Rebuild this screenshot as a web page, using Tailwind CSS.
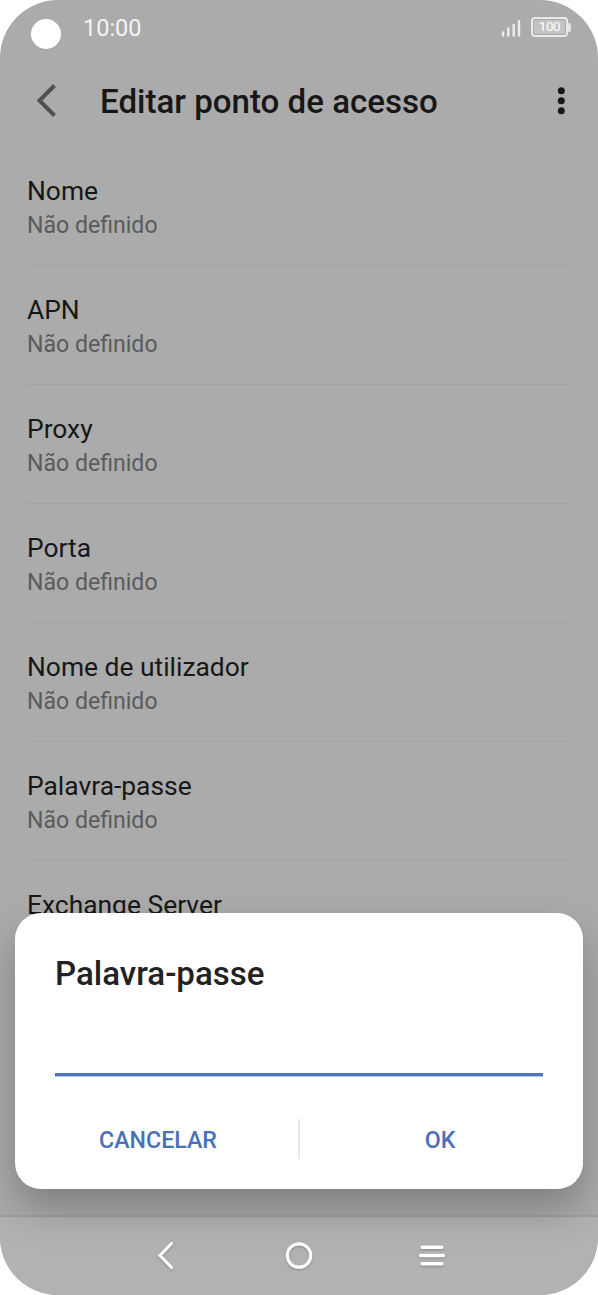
<!DOCTYPE html>
<html lang="pt">
<head>
<meta charset="utf-8">
<title>Editar ponto de acesso</title>
<script src="https://cdn.jsdelivr.net/npm/@tailwindcss/browser@4"></script>
</head>
<body class="bg-white">
<div class="relative flex h-[1295px] w-[598px] flex-col overflow-hidden rounded-[58px] bg-[#ababab] font-['Roboto',sans-serif] text-[#171717]">
  <header class="flex h-14 shrink-0 items-start pl-[31px] pr-[27px] text-[#f4f4f4]">
    <span class="mt-[19px] size-[30px] rounded-full bg-white"></span>
    <span class="ml-[22px] mt-[14px] text-[23.5px] leading-[28px]">10:00</span>
    <svg class="ml-auto mt-[20px]" width="20" height="18" viewBox="0 0 20 18" stroke="#ededed" stroke-width="2.4" stroke-linecap="round"><path d="M2 12.500v3M7.300 8.500v7M12.700 5v10.500M18 1.200v14.300"/></svg>
    <div class="ml-[10px] mt-[17px] flex items-center">
      <div class="flex h-[20px] w-[37px] rounded-[4px] border-2 border-[#e9e9e9] p-px">
        <span class="flex flex-1 items-center justify-center rounded-[2px] bg-[#c3c3c3] text-[13.5px] leading-none tracking-[-0.5px] text-white">100</span>
      </div>
      <span class="h-[9px] w-[3px] rounded-r-[2px] bg-[#e2e2e2]"></span>
    </div>
  </header>

  <div class="flex h-[91px] shrink-0 items-center pl-[35px] pr-[33px]">
    <svg class="-mt-px" width="22" height="34" viewBox="0 0 22 34" fill="none" stroke="#505050" stroke-width="4"><path d="M19.500 1.500 4.500 16.500l15 15"/></svg>
    <h1 class="ml-[43px] mt-px text-[33.1px] font-medium leading-[40px]">Editar ponto de acesso</h1>
    <svg class="-mt-px ml-auto" width="8" height="28" viewBox="0 0 8 28" fill="#171717"><circle cx="4.300" cy="3.800" r="3.500"/><circle cx="4.300" cy="13.800" r="3.500"/><circle cx="4.300" cy="23.800" r="3.500"/></svg>
  </div>

  <main class="flex h-[1069px] shrink-0 flex-col overflow-hidden pl-[27px] pr-[26px]">
    <div class="flex h-[119px] shrink-0 flex-col border-b border-[#a2a2a2] pt-[28px]"><span class="text-[26.4px] leading-[32px]">Nome</span><span class="mt-[5px] text-[23.1px] leading-[28px] text-[#5b5b5b]">Não definido</span></div>
    <div class="flex h-[119px] shrink-0 flex-col border-b border-[#a2a2a2] pt-[28px]"><span class="text-[26.4px] leading-[32px]">APN</span><span class="mt-[5px] text-[23.1px] leading-[28px] text-[#5b5b5b]">Não definido</span></div>
    <div class="flex h-[119px] shrink-0 flex-col border-b border-[#a2a2a2] pt-[28px]"><span class="text-[26.4px] leading-[32px]">Proxy</span><span class="mt-[5px] text-[23.1px] leading-[28px] text-[#5b5b5b]">Não definido</span></div>
    <div class="flex h-[119px] shrink-0 flex-col border-b border-[#a2a2a2] pt-[28px]"><span class="text-[26.4px] leading-[32px]">Porta</span><span class="mt-[5px] text-[23.1px] leading-[28px] text-[#5b5b5b]">Não definido</span></div>
    <div class="flex h-[119px] shrink-0 flex-col border-b border-[#a2a2a2] pt-[28px]"><span class="text-[26.4px] leading-[32px]">Nome de utilizador</span><span class="mt-[5px] text-[23.1px] leading-[28px] text-[#5b5b5b]">Não definido</span></div>
    <div class="flex h-[119px] shrink-0 flex-col border-b border-[#a2a2a2] pt-[28px]"><span class="text-[26.4px] leading-[32px]">Palavra-passe</span><span class="mt-[5px] text-[23.1px] leading-[28px] text-[#5b5b5b]">Não definido</span></div>
    <div class="flex h-[119px] shrink-0 flex-col pt-[28px]"><span class="text-[26.4px] leading-[32px]">Exchange Server</span></div>
  </main>

  <nav class="-mt-px h-[80px] shrink-0 border-t-2 border-[#a0a0a0] bg-[#b2b2b2]"></nav>

  <!-- Password dialog -->
  <section class="absolute left-[15px] top-[913px] flex h-[276px] w-[568px] flex-col rounded-[26px] bg-white px-10 shadow-[0_20px_40px_rgba(0,0,0,0.26)]">
    <h2 class="mt-[41px] text-[33.1px] font-medium leading-[40px] text-[#222222]">Palavra-passe</h2>
    <div class="mt-[79px] h-[4px] border-b border-[#b0c5e6] bg-[#5076b9]"></div>
    <div class="-mx-[37px] mt-[42px] flex h-10 items-center text-[23.2px] font-medium text-[#4a70b8]">
      <button class="flex-1 pt-[2px]">CANCELAR</button>
      <span class="h-10 w-[2px] bg-[#e8e8e8]"></span>
      <button class="flex-1 pt-[2px]">OK</button>
    </div>
  </section>

  <!-- Navigation buttons, drawn above the dialog's shadow -->
  <div class="absolute bottom-0 left-0 flex h-[79px] w-full items-center pl-[156px]">
    <svg class="drop-shadow-[0_1px_1px_rgba(0,0,0,0.25)]" width="20" height="32" viewBox="0 0 20 32" fill="none" stroke="#fff" stroke-width="3.200" stroke-linecap="round" stroke-linejoin="miter"><path d="M15.500 3.500 4 15.500l11.500 12"/></svg>
    <svg class="ml-[108px] drop-shadow-[0_1px_1px_rgba(0,0,0,0.25)]" width="30" height="32" viewBox="0 0 30 32" fill="none" stroke="#fff" stroke-width="3.200"><circle cx="15" cy="15.500" r="11.700"/></svg>
    <svg class="ml-[103px] drop-shadow-[0_1px_1px_rgba(0,0,0,0.25)]" width="30" height="32" viewBox="0 0 30 32" stroke="#fff" stroke-width="3.400" stroke-linecap="round"><path d="M5 7.300h20M3.500 15.500h23M5 23.800h20"/></svg>
  </div>
</div>
</body>
</html>
